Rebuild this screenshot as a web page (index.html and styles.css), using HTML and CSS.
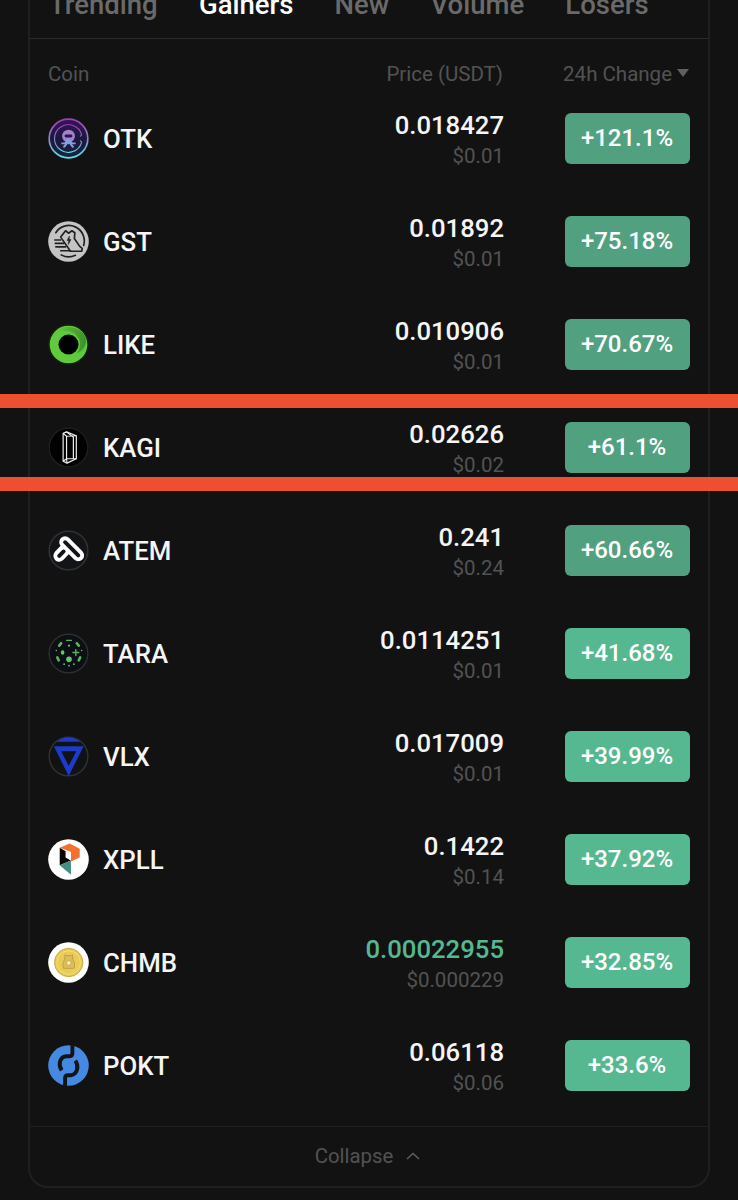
FILE: index.html
```html
<!DOCTYPE html>
<html lang="en">
<head>
  <meta charset="UTF-8">
  <meta name="viewport" content="width=device-width, initial-scale=1.0">
  <title>Gainers</title>
  <link rel="stylesheet" href="styles.css">
</head>
<body>
  <main class="card">
    <nav class="tabs">
      <span class="tab">Trending</span>
      <span class="tab active">Gainers</span>
      <span class="tab">New</span>
      <span class="tab">Volume</span>
      <span class="tab">Losers</span>
    </nav>

    <div class="head">
      <span>Coin</span>
      <span class="head-price">Price (USDT)</span>
      <span class="head-change">24h Change <i class="caret"></i></span>
    </div>

    <div class="list">
      <div class="row">
        <svg class="icon" viewBox="0 0 42 42">
          <defs>
            <linearGradient id="otk" x1="0" y1="0" x2="0" y2="1">
              <stop offset="0" stop-color="#9d3fb0"/>
              <stop offset=".5" stop-color="#8e86c4"/>
              <stop offset="1" stop-color="#5fe0e6"/>
            </linearGradient>
            <linearGradient id="otk-bg" x1="0" y1="0" x2="0" y2="1">
              <stop offset="0" stop-color="#37135a"/>
              <stop offset=".5" stop-color="#1d1740"/>
              <stop offset="1" stop-color="#15253f"/>
            </linearGradient>
          </defs>
          <circle cx="21" cy="21" r="19.8" fill="url(#otk-bg)" stroke="url(#otk)" stroke-width="1.7"/>
          <path d="M34.5 17a14.2 14.2 0 1 0 0 8M34.5 17l-1.5 2M34.5 25l-1.5-2" fill="none" stroke="url(#otk)" stroke-width="1.1"/>
          <path d="M14.5 18.5a6.5 6.5 0 0 1 13 0c0 2.500-1.200 4.500-3 5.500h-7c-1.800-1-3-3-3-5.500z" fill="#a183cb"/>
          <rect x="17" y="17" width="8" height="3" rx="1.5" fill="#28164c"/>
          <path d="M21 22v4M19 23c0 3-2 3-4.500 3M20 23c0 4-2 4-3.500 6.500M23 23c0 3 2 3 4.500 3M22 23c0 4 2 4 3.500 6.500" fill="none" stroke="#83a0dc" stroke-width="2" stroke-linecap="round"/>
        </svg>
        <span class="name">OTK</span>
        <div class="price"><b>0.018427</b><small>$0.01</small></div>
        <span class="change dim">+121.1%</span>
      </div>

      <div class="row">
        <svg class="icon" viewBox="0 0 42 42">
          <circle cx="21" cy="21" r="20.8" fill="#c4c4c4"/>
          <g fill="none" stroke="#202020" stroke-width="1.7" stroke-linejoin="round" stroke-linecap="round">
            <path d="M8 12a15.8 15.8 0 0 1 28.500 13M28 35.200a15.8 15.8 0 0 1-14.500-.5"/>
            <path d="M13 16.500l5-6.500 3 2.500 3.500-2.500 3 2-.5 6 5.500 8 2.500 2-.5 3H23z"/>
            <path d="M7 19.500h6M7.500 23h8.500M8 26.500h10M13 30.500h10"/>
          </g>
          <path d="M22 15.500l-2.500 4.500h1.800l-.5 4 2.700-5h-1.800z" fill="#202020" stroke="#202020" stroke-width=".6"/>
        </svg>
        <span class="name">GST</span>
        <div class="price"><b>0.01892</b><small>$0.01</small></div>
        <span class="change dim">+75.18%</span>
      </div>

      <div class="row">
        <svg class="icon" viewBox="0 0 42 42">
          <defs>
            <linearGradient id="like" x1="0" y1="0" x2="1" y2="0">
              <stop offset="0" stop-color="#62d03d"/>
              <stop offset="1" stop-color="#3d8f27"/>
            </linearGradient>
          </defs>
          <circle cx="21" cy="21" r="20.2" fill="#101310" stroke="#1d241c" stroke-width="1"/>
          <circle cx="21" cy="21" r="19.3" fill="#5fca3c"/>
          <path d="M7 9.500A19 19 0 0 1 38.500 14c2 8-3 14-9 16A15 15 0 0 0 32 16C27 6 16 5 7 9.500z" fill="url(#like)"/>
          <circle cx="21" cy="21" r="10.3" fill="#010101"/>
        </svg>
        <span class="name">LIKE</span>
        <div class="price"><b>0.010906</b><small>$0.01</small></div>
        <span class="change dim">+70.67%</span>
      </div>

      <div class="row marked">
        <svg class="icon" viewBox="0 0 42 42">
          <circle cx="21" cy="21" r="19.8" fill="#010101" stroke="#202020" stroke-width="1.3"/>
          <g fill="none" stroke="#f0f0f0" stroke-width="1.200" stroke-linejoin="round">
            <path d="M15.500 6.500l3.500-1.500 10 4v23.500L19.500 37l-4-2z"/>
            <path d="M15.500 6.500l3.500 3v23l-3.500 2.500M19 9.500l10-.5M19 5l7 5.500M19 32.500h10M19 32.500l.5 4.500M26 10v22"/>
          </g>
        </svg>
        <span class="name">KAGI</span>
        <div class="price"><b>0.02626</b><small>$0.02</small></div>
        <span class="change dim">+61.1%</span>
      </div>

      <div class="row">
        <svg class="icon" viewBox="0 0 42 42">
          <circle cx="21" cy="21" r="19.8" fill="#131418" stroke="#313237" stroke-width="1.5"/>
          <g fill="none" stroke-linecap="round">
            <path d="M11.500 26.500l7-7.500M17.500 12.500L31 26" stroke="#fff" stroke-width="12"/>
            <path d="M11.500 26.500l4.500-4.500M17.500 12.500L31 26" stroke="#131418" stroke-width="4"/>
          </g>
        </svg>
        <span class="name">ATEM</span>
        <div class="price"><b>0.241</b><small>$0.24</small></div>
        <span class="change dim">+60.66%</span>
      </div>

      <div class="row">
        <svg class="icon" viewBox="0 0 42 42">
          <circle cx="21" cy="21" r="19.8" fill="#0c0f14" stroke="#2c2e32" stroke-width="1.5"/>
          <g fill="#69c46b">
            <circle cx="21.5" cy="27" r="2.900"/>
            <ellipse cx="15" cy="20" rx="1.800" ry="2.300"/>
            <circle cx="21.5" cy="13" r="1.100"/>
            <circle cx="16.5" cy="32" r=".9"/>
            <circle cx="21.5" cy="33.5" r=".9"/>
            <circle cx="26.5" cy="32" r=".9"/>
            <circle cx="8.5" cy="18" r=".8"/>
            <circle cx="34.5" cy="18" r=".8"/>
          </g>
          <g stroke="#5cb35f" stroke-linecap="round" stroke-width="2.700">
            <path d="M11.500 13l2-2.500M29.500 10.500l2 2.500M9.500 25l1.500 3M33 25l-1.500 3"/>
            <path d="M19 7.500h5" stroke-width="1.400"/>
            <path d="M28.500 17v6M25.500 20h6" stroke-width="1.400"/>
          </g>
        </svg>
        <span class="name">TARA</span>
        <div class="price"><b>0.0114251</b><small>$0.01</small></div>
        <span class="change">+41.68%</span>
      </div>

      <div class="row">
        <svg class="icon" viewBox="0 0 42 42">
          <circle cx="21" cy="21" r="19.8" fill="#111214" stroke="#303134" stroke-width="1.5"/>
          <path d="M8.500 6a20 20 0 0 1 25 0z" fill="#1c3bc8"/>
          <path fill-rule="evenodd" d="M6 10.500h30.500L21.200 41zM13.500 15.500l7.700 15 7.800-15z" fill="#1c3bc8"/>
        </svg>
        <span class="name">VLX</span>
        <div class="price"><b>0.017009</b><small>$0.01</small></div>
        <span class="change">+39.99%</span>
      </div>

      <div class="row">
        <svg class="icon" viewBox="0 0 42 42">
          <circle cx="21" cy="21" r="20.8" fill="#fff"/>
          <path d="M12 9l10-4.500 10.500 5.500v9l-9 4V13z" fill="#f27030"/>
          <path d="M12 9l7 4v6l4.500 3L12 27z" fill="#080808"/>
          <path d="M12 27l11.500-5v14.500z" fill="#3f8f82"/>
          <path d="M18 12.500l5.500 1.500v8l-5.500-3z" fill="#fff"/>
        </svg>
        <span class="name">XPLL</span>
        <div class="price"><b>0.1422</b><small>$0.14</small></div>
        <span class="change">+37.92%</span>
      </div>

      <div class="row">
        <svg class="icon" viewBox="0 0 42 42">
          <circle cx="21" cy="21" r="20.8" fill="#fff"/>
          <circle cx="21.2" cy="21" r="14.5" fill="#e8cc55" stroke="#c9a53c" stroke-width="1"/>
          <circle cx="21.2" cy="21" r="12" fill="none" stroke="#f5e08a" stroke-width=".8"/>
          <path d="M17.500 13l1.500 1h4.500l1.500-1 .5 5c2 3 2.200 6 1 9h-10.500c-1.200-3-1-6 1-9z" fill="#dcbd58" stroke="#b5973c" stroke-width=".8"/>
          <circle cx="21.3" cy="21.5" r="2.300" fill="#faf0c0" stroke="#b5973c" stroke-width=".6"/>
        </svg>
        <span class="name">CHMB</span>
        <div class="price"><b class="up">0.00022955</b><small>$0.000229</small></div>
        <span class="change">+32.85%</span>
      </div>

      <div class="row">
        <svg class="icon" viewBox="0 0 42 42">
          <circle cx="21" cy="21" r="20.8" fill="#4489e2"/>
          <g fill="none" stroke="#121416" stroke-width="4">
            <path d="M25 0V8.500q0 3-3 3h-3C12 12 10 20 14 26"/>
            <path d="M17.500 42V34q0-3 3-3h3C30 30 32 22 28 16"/>
          </g>
        </svg>
        <span class="name">POKT</span>
        <div class="price"><b>0.06118</b><small>$0.06</small></div>
        <span class="change">+33.6%</span>
      </div>
    </div>

    <div class="collapse">
      <span>Collapse</span>
      <svg class="chevron" viewBox="0 0 14 8"><path d="M1 7l6-5.500L13 7"/></svg>
    </div>
  </main>
</body>
</html>
```
FILE: styles.css
```css
* {
  box-sizing: border-box;
}

body {
  margin: 0;
  height: 1200px;
  overflow: hidden;
  background: #121212;
  color: #f5f5f5;
  font-family: Roboto, sans-serif;
}

.card {
  height: 1188px;
  margin: 0 28px;
  border: 2px solid #202020;
  border-top: 0;
  border-radius: 0 0 20px 20px;
}

.tabs {
  display: flex;
  align-items: flex-end;
  gap: 41.2px;
  height: 39px;
  padding: 0 19px 17px;
  border-bottom: 1px solid #2b2b2b;
}

.tab {
  font-size: 27.5px;
  font-weight: 500;
  line-height: 32px;
  color: #6a6a6a;
}

.tab.active {
  color: #fff;
}

.head {
  display: grid;
  grid-template-columns: 1fr 200px 187px;
  align-items: center;
  height: 48px;
  padding: 22px 18px 0;
  font-size: 20.5px;
  line-height: 26px;
  color: #525252;
}

.head-price {
  text-align: right;
}

.head-change {
  display: flex;
  align-items: center;
  justify-content: flex-end;
  gap: 5px;
  padding-right: 1px;
}

.caret {
  margin-bottom: 2px;
  border: 6px solid transparent;
  border-top: 8px solid #606060;
  border-bottom: 0;
}

.row {
  position: relative;
  display: grid;
  grid-template-columns: 41px 1fr 200px 125px;
  align-items: center;
  height: 103px;
  padding: 0 18px;
}

.icon {
  width: 41px;
  height: 41px;
}

.name {
  padding-left: 14px;
  font-size: 25.8px;
  font-weight: 500;
}

.price {
  display: flex;
  flex-direction: column;
  align-items: flex-end;
  padding: 4px 61px 0 0;
}

.price b {
  font-size: 25.7px;
  font-weight: 500;
  line-height: 32px;
}

.price small {
  font-size: 20.5px;
  line-height: 31px;
  color: #525252;
}

.price .up {
  color: #55b890;
}

.change {
  height: 51px;
  padding-right: 1px;
  border-radius: 6px;
  background: #56b890;
  color: #fff;
  font-size: 24px;
  font-weight: 500;
  line-height: 51px;
  text-align: center;
}

.change.dim {
  background: #51a180;
}

/* highlight bars above and below the row */
.marked::before,
.marked::after {
  content: "";
  position: absolute;
  left: -30px;
  width: 738px;
  height: 14px;
  background: #ed5030;
}

.marked::before {
  top: -2px;
}

.marked::after {
  bottom: 8px;
}

.collapse {
  display: flex;
  align-items: center;
  justify-content: center;
  gap: 13px;
  height: 59px;
  margin-top: 9px;
  padding-right: 3px;
  border-top: 1px solid #212121;
  font-size: 20.4px;
  color: #525252;
}

.chevron {
  width: 14px;
  height: 8px;
  fill: none;
  stroke: #606060;
  stroke-width: 1.4;
}
```
